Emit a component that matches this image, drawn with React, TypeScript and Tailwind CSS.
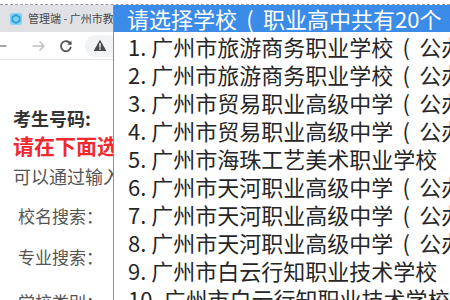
const SCHOOLS = [
  "1. 广州市旅游商务职业学校（公办）",
  "2. 广州市旅游商务职业学校（公办）",
  "3. 广州市贸易职业高级中学（公办）",
  "4. 广州市贸易职业高级中学（公办）",
  "5. 广州市海珠工艺美术职业学校",
  "6. 广州市天河职业高级中学（公办）",
  "7. 广州市天河职业高级中学（公办）",
  "8. 广州市天河职业高级中学（公办）",
  "9. 广州市白云行知职业技术学校",
  "10. 广州市白云行知职业技术学校",
];

// the select renders the full-width paren with its glyph centred in a wide cell
function Label({ text }: { text: string }) {
  const parts = text.split("（");
  if (parts.length === 1) return <>{text}</>;
  return (
    <>
      {parts[0]}
      <span className="inline-block w-[26px] text-center">(</span>
      {parts[1]}
    </>
  );
}

function Favicon() {
  return (
    <svg width="12" height="12" viewBox="0 0 12 12">
      <rect x="0" y="0" width="12" height="12" rx="3" fill="#7fd0f2" />
      <path d="M6 2 L9.5 4 L9.5 8 L6 10 L2.5 8 L2.5 4 Z" fill="none" stroke="#2a9fd6" strokeWidth="1.6" />
    </svg>
  );
}

function Toolbar() {
  return (
    <div className="h-[28px] border-b border-[#e3e3e3] bg-white flex items-center relative">
      {/* back arrow, clipped at the window edge */}
      <svg width="16" height="16" viewBox="0 0 16 16" className="ml-[-8px]">
        <path d="M14 8 H3 M7 4 L3 8 L7 12" fill="none" stroke="#8a8a8a" strokeWidth="1.6" strokeLinecap="round" strokeLinejoin="round" />
      </svg>
      <svg width="16" height="16" viewBox="0 0 16 16" className="ml-[23px]">
        <path d="M2 8 H13 M9 4 L13 8 L9 12" fill="none" stroke="#bdbdbd" strokeWidth="1.4" strokeLinecap="round" strokeLinejoin="round" />
      </svg>
      <svg width="16" height="16" viewBox="0 0 16 16" className="ml-[11px]">
        <path d="M12.5 6 A5 5 0 1 0 12.8 9.5" fill="none" stroke="#555" strokeWidth="1.8" strokeLinecap="round" />
        <path d="M13.5 2.5 L13.5 6.8 L9.2 6.8 Z" fill="#555" />
      </svg>
      <div className="ml-[11px] h-[22px] w-[60px] rounded-full bg-[#f1f3f4] flex items-center pl-[8px]">
        <svg width="14" height="13" viewBox="0 0 14 13">
          <path d="M7 0.8 L13.4 12 L0.6 12 Z" fill="#4a4a4a" strokeLinejoin="round" />
          <rect x="6.3" y="4.2" width="1.4" height="4.4" fill="white" />
          <rect x="6.3" y="9.4" width="1.4" height="1.4" fill="white" />
        </svg>
      </div>
    </div>
  );
}

export default function App() {
  return (
    <div className="relative w-[450px] h-[300px] overflow-hidden bg-white font-['Noto_Sans_CJK_SC',sans-serif]">
      <div className="h-[5px] border-b border-dashed border-[#9a9a9a] bg-white" />
      <div className="h-[27px] bg-[#dfe1e5] flex items-center pl-[10px] gap-[6px]">
        <Favicon />
        <span className="text-[11px] leading-[11px] text-[#4a4a4a] whitespace-nowrap">管理端 - 广州市教育局</span>
      </div>
      <Toolbar />

      <div className="pl-[13px]">
        <div className="mt-[49px] text-[18px] leading-[18px] font-bold text-[#333]">考生号码:</div>
        <div className="mt-[8px] text-[21px] leading-[21px] font-bold text-[#ef2a2f] whitespace-nowrap">请在下面选择要查询的学校</div>
        <div className="mt-[11px] text-[18px] leading-[18px] text-[#555] whitespace-nowrap">可以通过输入校名搜索</div>
        <div className="pl-[5px]">
          <div className="mt-[22px] text-[17px] leading-[17px] text-[#555]">校名搜索：</div>
          <div className="mt-[24px] text-[17px] leading-[17px] text-[#555]">专业搜索：</div>
          <div className="mt-[28px] text-[17px] leading-[17px] text-[#555]">学校类别：</div>
        </div>
      </div>

      <div className="absolute left-[113px] top-[5px] w-[420px] bg-white border-l border-[#8f8f8f]">
        <div className="h-[27px] bg-[#3b8be8] text-white text-[22px] leading-[27px] pl-[13px] whitespace-nowrap">
          <Label text="请选择学校（职业高中共有20个" />
        </div>
        {SCHOOLS.map((s, i) => (
          <div key={i} className="h-[28px] text-[22px] leading-[28px] pl-[14px] text-[#262626] whitespace-nowrap">
            <Label text={s} />
          </div>
        ))}
      </div>
    </div>
  );
}
